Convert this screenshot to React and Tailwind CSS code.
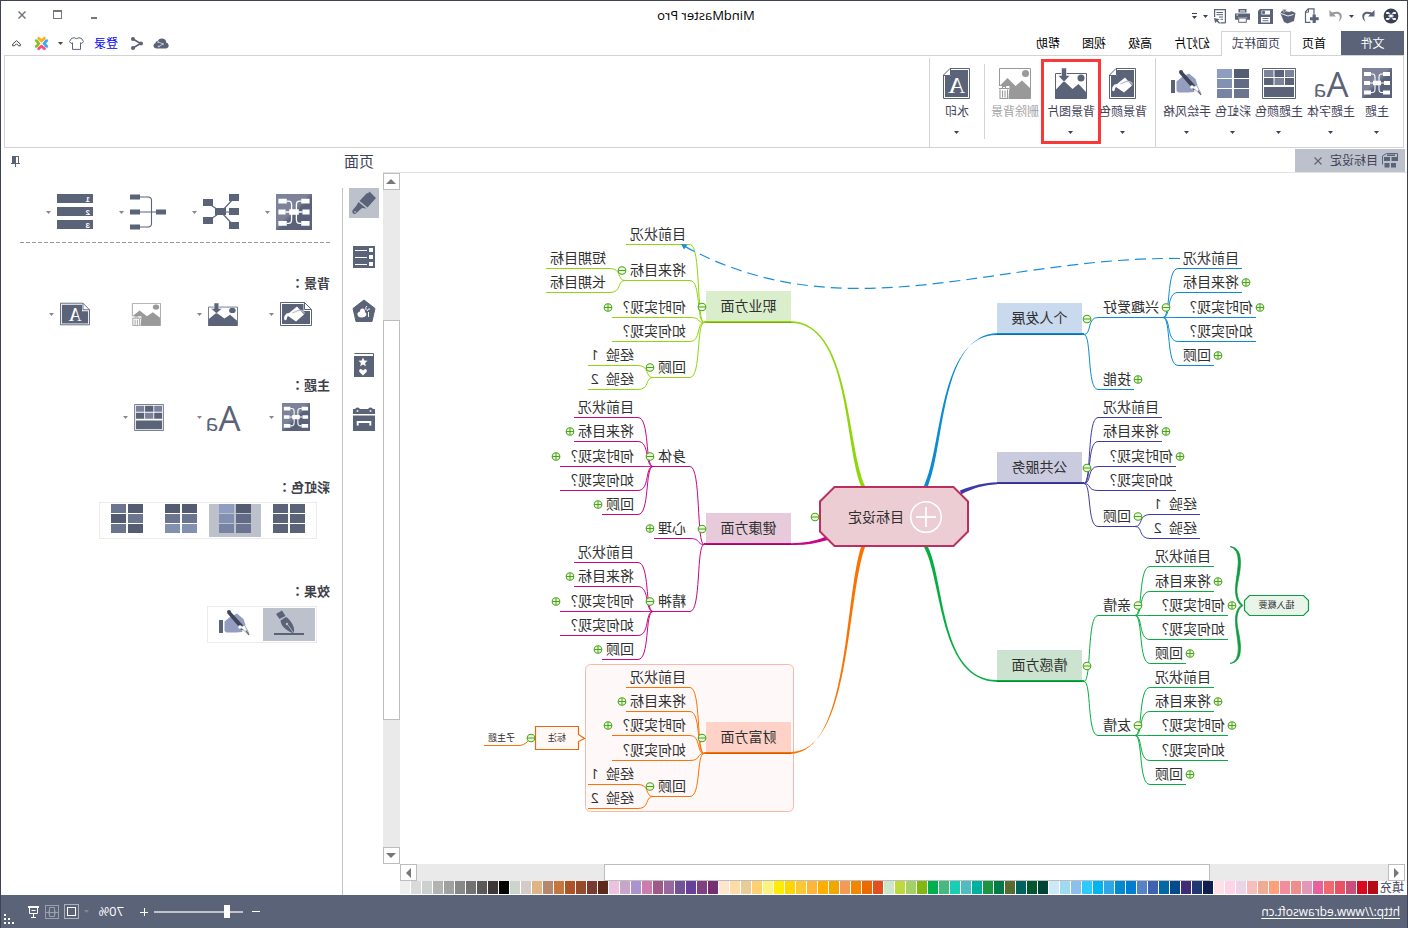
import React from "react";

const INK = "#5b6378";

/* ---------- icons ---------- */

function Caret({ className = "text-[#3f4257]" }) {
  return (
    <svg width="5" height="3" viewBox="0 0 5 3" className={className} aria-hidden="true">
      <path d="M0 0h5L2.5 3z" fill="currentColor" />
    </svg>
  );
}

function LogoIcon() {
  return (
    <svg width="16" height="16" viewBox="0 0 16 16" aria-hidden="true">
      <circle cx="8" cy="8" r="7.4" fill="#3a4055" />
      <path d="M4 5h2.5l1 3-1 3H4M12 5H9.500l-1 3 1 3H12M5 8h6" fill="none" stroke="#fff" strokeWidth="0.800" />
      <path d="M3.200 4h2.600v2H3.200zM10.200 4h2.600v2h-2.600zM3.200 10h2.600v2H3.200zM10.200 10h2.600v2h-2.600zM6.500 7h3v2h-3z" fill="#fff" />
    </svg>
  );
}

function UndoIcon({ color = INK, flip = false }) {
  return (
    <svg width="14" height="14" viewBox="0 0 14 14" aria-hidden="true">
      <g transform={flip ? "translate(14 0) scale(-1 1)" : undefined}>
        <path d="M.500 1v6.500H7L4.900 5.400C9 3.600 13 6 9.500 13 15.800 7.800 12.500.2 3 3.500z" fill={color} />
      </g>
    </svg>
  );
}

function NewPageIcon() {
  return (
    <svg width="15" height="16" viewBox="0 0 15 16" aria-hidden="true">
      <path d="M8.500 14.300h5V3.800L10.800.8H5v6" fill="none" stroke={INK} strokeWidth="1.200" />
      <path d="M10.500 1v3.200h3" fill="none" stroke={INK} strokeWidth="1" />
      <path d="M3.200 6.500h3.200v2.700H9v3H6.400V15H3.200v-2.800H.3v-3h2.900z" fill={INK} />
    </svg>
  );
}

function OpenIcon() {
  return (
    <svg width="16" height="15" viewBox="0 0 16 15" aria-hidden="true">
      <path d="M.500 4l4-2 2 1 7.500-1.500 1.500 3L12 13l-3.500 1.500L2 12z" fill={INK} />
      <path d="M2.500 5.500L8 7l7-2.500" stroke="#fff" strokeWidth="0.900" fill="none" />
      <path d="M9 .500l4.500-.2L12 3.500z" fill={INK} stroke="#fff" strokeWidth="0.500" />
    </svg>
  );
}

function SaveIcon() {
  return (
    <svg width="15" height="15" viewBox="0 0 15 15" aria-hidden="true">
      <path d="M0 0h13l2 2v13H0z" fill={INK} />
      <path d="M3 1.500h8.500v4H3zM3 8h9v5.500H3z" fill="#fff" />
      <path d="M8.500 2.200h1.800v2.400H8.500zM4.500 9.500h6M4.500 11.700h6" stroke={INK} strokeWidth="0.900" fill={INK} />
    </svg>
  );
}

function PrintIcon() {
  return (
    <svg width="15" height="14" viewBox="0 0 15 14" aria-hidden="true">
      <path d="M3.500 0h8v3.500h-8zM0 4.500h15v6.300h-3V8.500H3v2.300H0z" fill={INK} />
      <path d="M3.700 9h7.600v4.300H3.700z" fill="#fff" stroke={INK} />
      <path d="M5 2h5M12 6h1.500" stroke="#fff" />
    </svg>
  );
}

function ExportIcon() {
  return (
    <svg width="12" height="15" viewBox="0 0 12 15" aria-hidden="true">
      <path d="M.6 13.900V.6h10.800V8M.6 13.900h5" fill="none" stroke={INK} strokeWidth="1.200" />
      <path d="M3 3.500h6.500M3 5.700h6.500M3 8h4M3 10.300h2.500" stroke={INK} />
      <path d="M12 9l-5.500 1.200 1.600 1.200L5.800 14l1 .8 2.500-2.300 1.500 1.500z" fill={INK} />
    </svg>
  );
}

function ThemeIcon({ size = 30, id }) {
  return (
    <svg width={size} height={size} viewBox="0 0 30 30" aria-hidden="true">
      <defs>
        <linearGradient id={id} x1="1" y1="0" x2="0" y2="1">
          <stop offset="0.450" stopColor="#7d829a" />
          <stop offset="0.550" stopColor="#59627a" />
        </linearGradient>
      </defs>
      <path d="M0 0h30v30H0z" fill={`url(#${id})`} />
      <path d="M2 4h7v4H2zM21 4h7v4h-7zM2 13h6v4H2zM22 13h6v4h-6zM2 22.500h7v4H2zM21 22.500h7v4h-7zM11 12.800h8v4.500h-8z" fill="#fff" />
      <path
        d="M8 15h14M9 6h1.500q2.500 0 2.500 3v12q0 3.500-2.500 3.500H9M21 6h-1.500Q17 6 17 9v12q0 3.500 2.500 3.500H21"
        fill="none"
        stroke="#fff"
        strokeWidth="1.100"
      />
    </svg>
  );
}

function AaIcon() {
  return (
    <span aria-hidden="true" className="flex items-baseline pt-[6px] leading-[30px] text-[#5b6378]">
      <span className="text-[35px]">A</span>
      <span className="text-[23px]">a</span>
    </span>
  );
}

function ColorsIcon({ w = 34, h = 31 }) {
  const light = "#7d829c";
  return (
    <svg width={w} height={h} viewBox="0 0 34 31" aria-hidden="true">
      <path d="M.5.500h33v30H.500z" fill="#fff" stroke={INK} />
      <path d="M2 2h9v7H2zM22.500 2h9.500v7h-9.500zM12 10h9.500v7H12z" fill={light} />
      <path d="M12 2h9.500v7H12zM2 10h9v7H2zM22.500 10h9.500v7h-9.500zM2 19h30v10H2z" fill={INK} />
    </svg>
  );
}

function RainbowIcon({ fills }) {
  return (
    <svg width="32" height="29" viewBox="0 0 32 29" aria-hidden="true">
      {fills.map((f, i) => (
        <rect key={i} x={(i % 2) * 17} y={Math.floor(i / 2) * 10} width="15" height="9" fill={f} />
      ))}
    </svg>
  );
}

function HandPenIcon() {
  return (
    <svg width="31" height="26" viewBox="0 0 31 26" aria-hidden="true">
      <path d="M27 10h4v13h-4z" fill={INK} />
      <path d="M25.500 11.500L20 7 13 3.500 6.500 9 4.500 15l5 2.500-2 4.500 7 .5h9l2-1.500z" fill="#939dbf" />
      <path d="M19.500 1.500l3 2L8 20.500 4.500 18z" fill="#3f465a" />
      <path d="M9.500 17.500l-4-2.500L1 23.500l.8.700z" fill="#fff" stroke="#8d93a8" strokeWidth="0.800" />
      <path d="M1 25l3-4.500" stroke={INK} strokeWidth="1.200" />
      <circle cx="21" cy="2" r="2" fill="#3f465a" />
      <circle cx="10" cy="17" r="1.800" fill="#fff" />
    </svg>
  );
}

function Bucket() {
  return (
    <>
      <path d="M11 2.500L19 9l2.500.5q2 1.500 2.500 5-.5 2.500-2 1.500-1-.5-1-2.500l-1-1.500L12 17.500 4 10.500z" fill="#fff" />
      <path d="M3.500 9.500Q5 5.500 10 6.500l5.500 2.500" fill="none" stroke="#b9bdcb" strokeWidth="1.300" />
    </>
  );
}

function PortraitPage({ children }) {
  return (
    <svg width="27" height="31" viewBox="0 0 27 31" aria-hidden="true">
      <path d="M.5.500H20L26.500 7v23.500H.500z" fill="#fff" stroke={INK} />
      <path d="M2 2h17v6h6v21H2z" fill={INK} />
      <path d="M19.500 1v6.500H26" fill="none" stroke={INK} />
      {children}
    </svg>
  );
}

function LandscapePage({ children }) {
  return (
    <svg width="32" height="24" viewBox="0 0 32 24" aria-hidden="true">
      <path d="M7.500.500h24v23H.500V7.500z" fill="#fff" stroke={INK} />
      <path d="M8.500 2H30v20H2V9h6.500z" fill={INK} />
      <path d="M7.500.500v7H.500" fill="none" stroke={INK} />
      {children}
    </svg>
  );
}

function ImageIcon({ w = 32, h = 31 }) {
  return (
    <svg width={w} height={h} viewBox="0 0 32 31" preserveAspectRatio="none" aria-hidden="true">
      <path d="M.5 5.500h31v25H.500z" fill="#fff" stroke={INK} />
      <path d="M1 23l7.500-8 6 5 8.500-8 8.500 9v9.500H1z" fill={INK} transform="translate(0 1)" />
      <circle cx="6" cy="10" r="3.500" fill={INK} />
      <path d="M20.500 0h5v7.500H29L23 14l-6-6.500h3.500z" fill={INK} stroke="#fff" strokeWidth="0.600" />
    </svg>
  );
}

function RemoveImageIcon({ w = 33, h = 31 }) {
  return (
    <svg width={w} height={h} viewBox="0 0 33 31" preserveAspectRatio="none" aria-hidden="true">
      <path d="M.5.500h31v30H.500z" fill="#fff" stroke="#999" />
      <path d="M1 20l8-7.500 6.500 5.500 8-8 8 8v12.500H1z" fill="#999" />
      <circle cx="5.500" cy="5.500" r="3.500" fill="#999" />
      <path d="M21.500 18H33v13H22.500z" fill="#fff" />
      <path d="M22 20.500h10M25.500 20v-1.500h3V20M23.500 21.500v9h7.500v-9M26 22.500v7M28.500 22.500v7" fill="none" stroke="#999" strokeWidth="1.100" />
    </svg>
  );
}

function NibIcon() {
  return (
    <svg width="30" height="26" viewBox="0 0 30 26" aria-hidden="true">
      <path d="M0 23h30v2H0z" fill={INK} />
      <path d="M22 .500l6 3.500-3.500 5-6-3z" fill={INK} />
      <path d="M18 7l5.500 3.500c-.5 5-4 9-12 12.500L10 22C9 16 14 9.500 18 7z" fill={INK} />
      <path d="M11 22l5.500-7.500" stroke="#bdc1cc" strokeWidth="0.800" />
      <circle cx="17" cy="14" r="1.200" fill="#bdc1cc" />
    </svg>
  );
}

function RadialIcon() {
  return (
    <svg width="36" height="36" viewBox="0 0 36 36" aria-hidden="true">
      <path d="M5 4l13 14L5 32M2 18h16M18 18L31 9M18 18l13 9" fill="none" stroke={INK} strokeWidth="1.200" />
      <path d="M0 0h10v7H0zM0 14h10v7H0zM0 28h10v7H0zM13 14h11v7H13zM26 5h10v7H26zM26 23h10v7H26z" fill={INK} />
    </svg>
  );
}

function TreeIcon() {
  return (
    <svg width="36" height="36" viewBox="0 0 36 36" aria-hidden="true">
      <path d="M8 18h20M28 3H18q-3.500 0-3.500 3.500v23q0 3.500 3.500 3.500h10" fill="none" stroke={INK} strokeWidth="1.100" />
      <path d="M0 15.500h10v5H0zM26 .500h10v5H26zM26 15.500h10v5H26zM26 30.500h10v5H26z" fill={INK} />
    </svg>
  );
}

function NumberedIcon() {
  return (
    <svg width="36" height="36" viewBox="0 0 36 36" aria-hidden="true">
      <path d="M0 0h36v9H0zM0 13h36v9H0zM0 26h36v9H0z" fill={INK} />
      <g fill="#fff" fontSize="8" fontWeight="700" fontFamily="'Liberation Sans',sans-serif">
        <text x="3" y="7.500">1</text>
        <text x="3" y="20.500">2</text>
        <text x="3" y="33.500">3</text>
      </g>
    </svg>
  );
}

function BrushIcon() {
  return (
    <svg width="24" height="24" viewBox="0 0 24 24" aria-hidden="true">
      <g fill={INK}>
        <path d="M6.500.500L8 2.500 9 2l7.500 8-8 6.500L0 7z" />
        <path d="M9.500 17.500l8-6.500 2 3.500 3.700 4.500q1.300 2.500-.7 3.700-2 .8-3.500-1.200L14 17z" />
      </g>
      <path d="M8.800 17l8.200-6.800" stroke="#bdc1cc" strokeWidth="0.900" />
      <circle cx="20.900" cy="20.800" r="0.900" fill="#bdc1cc" />
    </svg>
  );
}

function ListIcon() {
  return (
    <svg width="22" height="22" viewBox="0 0 22 22" aria-hidden="true">
      <path d="M0 0h22v22H0z" fill={INK} />
      <path d="M2 2h4v4H2zM2 9h4v4H2zM2 16h4v4H2z" fill="#fff" />
      <path d="M8 4.500h12M8 11.500h12M8 18.500h12" stroke="#fff" />
    </svg>
  );
}

function PentagonIcon() {
  return (
    <svg width="24" height="24" viewBox="0 0 24 24" aria-hidden="true">
      <path d="M12 1L23 9.500 20 22.500H4L1 9.500z" fill={INK} stroke={INK} strokeLinejoin="round" />
      <path d="M11 13q0-3.500 2.500-3.500t2.500 3q3 .5 2.500 3.500-1 3-4.500 2.500T9.500 16q0-2 1.500-3z" fill="#fff" />
      <path d="M9 7q2 1 1 4M6 10q2.500-.5 3 2M7.500 13v5" stroke="#fff" strokeWidth="1" fill="none" />
    </svg>
  );
}

function StickerIcon() {
  return (
    <svg width="20" height="24" viewBox="0 0 20 24" aria-hidden="true">
      <path d="M.5 3V.500h19" fill="none" stroke={INK} />
      <path d="M0 3h20v21H0z" fill={INK} />
      <path d="M11 4.500l1.300 3 3.200.3-2.400 2.200.7 3.200L11 11.500l-2.800 1.700.7-3.200-2.400-2.200 3.200-.3z" fill="#fff" />
      <path d="M11 22.500l-3.700-3.700q-.8-2.300 1.200-2.800 1.500 0 2.500 1.500 1-1.500 2.500-1.500 2 .5 1.200 2.800z" fill="#fff" />
    </svg>
  );
}

function CalendarIcon() {
  return (
    <svg width="22" height="24" viewBox="0 0 22 24" aria-hidden="true">
      <path d="M0 2h22v5H0zM0 8.500h22V24H0z" fill={INK} />
      <circle cx="4.500" cy="3" r="2.500" fill={INK} />
      <circle cx="17.500" cy="3" r="2.500" fill={INK} />
      <path d="M3.700 4h1.600M16.700 4h1.600" stroke="#fff" strokeWidth="1.600" />
      <path d="M4.700 18.500V15h12.600v3.500" fill="none" stroke="#fff" strokeWidth="2" />
    </svg>
  );
}

function CloudIcon() {
  return (
    <svg width="16" height="11" viewBox="0 0 16 11" aria-hidden="true">
      <path d="M3.500 10.500Q.2 10.200.3 7.500.5 5 2.800 4.500 3 1 6.500.600 10 .200 11 2.800q2.300.200 2.600 2.300 2.200.900 2 3-.3 2.300-3 2.400z" fill={INK} />
      <path d="M10.500 4L6 6l4 2.500" stroke="#c9ccd6" fill="none" strokeWidth="0.900" />
      <path d="M10 3.200h1.600v1.600H10zM5.200 5.200h1.600v1.600H5.200zM9.500 7.700h1.600v1.600H9.500z" fill="#c9ccd6" />
    </svg>
  );
}

function ShareIcon() {
  return (
    <svg width="12" height="13" viewBox="0 0 12 13" aria-hidden="true">
      <path d="M10 2L2.500 6.500 10 11" fill="none" stroke={INK} strokeWidth="1.600" />
      <circle cx="10" cy="2" r="2" fill={INK} />
      <circle cx="2" cy="6.500" r="2" fill={INK} />
      <circle cx="10" cy="11" r="2" fill={INK} />
    </svg>
  );
}

function ShirtIcon() {
  return (
    <svg width="15" height="13" viewBox="0 0 15 13" aria-hidden="true">
      <path d="M5 .700q2.500 2 5 0l2.500.800 2 3-1.700 2-1.300-.7v6.600h-8V5.800l-1.300.7-1.700-2 2-3z" fill="#fff" stroke={INK} strokeLinejoin="round" />
    </svg>
  );
}

function ColorXIcon() {
  const petal = "M3.500 1.200Q5 0 6 1.800L7.500 3 9 1.800Q10 0 11.500 1.200 12.300 2.500 11 3.800L7.500 6.500 4 3.800Q2.700 2.500 3.500 1.200z";
  return (
    <svg width="15" height="15" viewBox="0 0 15 15" aria-hidden="true">
      <path d={petal} fill="#f9b01e" />
      <path d={petal} fill="#3aa8ee" transform="rotate(270 7.500 7.500)" />
      <path d={petal} fill="#f84c7c" transform="rotate(180 7.500 7.500)" />
      <path d={petal} fill="#8bbf1f" transform="rotate(90 7.500 7.500)" />
    </svg>
  );
}

function CollapseIcon() {
  return (
    <svg width="9" height="7" viewBox="0 0 9 7" aria-hidden="true">
      <path d="M.700 4L4.500.700 8.300 4v1.800H6.500l-2-2-2 2H.700z" fill="none" stroke="#444" />
    </svg>
  );
}

function PinIcon() {
  return (
    <svg width="9" height="11" viewBox="0 0 9 11" aria-hidden="true">
      <path d="M1 0h7v8H1zM0 7h9v1H0zM4 8h1v3H4z" fill={INK} />
      <path d="M2 1h2v6H2z" fill="#fff" />
    </svg>
  );
}

function DocIcon() {
  return (
    <svg width="16" height="15" viewBox="0 0 16 15" aria-hidden="true">
      <path d="M.500 4V.500h11L15.500 3v8.500" fill="none" stroke={INK} />
      <path d="M0 4h6.500v4H0zM8 4h6v4H8zM2 10h5v4.500H2zM8.500 10h5v4.500h-5zM3 1.500h8V3H3z" fill={INK} />
    </svg>
  );
}

/* ---------- mind map ---------- */

const ORIGIN = { x: 1, y: 173 };
const YS = (a) => [
  { t: "目前状况", y: a[0] },
  { t: "将来目标", y: a[1], s: "+" },
  { t: "何时实现？", y: a[2], s: "+" },
  { t: "如何实现？", y: a[3] },
  { t: "回顾", y: a[4], s: "+" },
];
const PAIR = (a, b) => [
  { t: "经验  1", y: a },
  { t: "经验  2", y: b },
];

const BRANCHES = [
  {
    t: "个人发展", dir: -1, y: 334, color: "#0a8bd2", fill: "#c9d9ee",
    kids: [
      { t: "兴趣爱好", y: 317, s: "-", kids: YS([268, 292, 317, 341, 365]) },
      { t: "技能", y: 389, s: "+" },
    ],
  },
  {
    t: "公共服务", dir: -1, y: 483, color: "#3f3ba6", fill: "#cbcbe0",
    kids: [
      ...YS([417, 441, 466, 490, 526]).slice(0, 4),
      { t: "回顾", y: 526, s: "-", kids: PAIR(514, 538) },
    ],
  },
  {
    t: "情感方面", dir: -1, y: 681, color: "#06ae42", fill: "#cce3cf",
    kids: [
      { t: "亲情", y: 615, s: "-", kids: YS([566, 591, 615, 639, 663]) },
      { t: "友情", y: 735, s: "-", kids: YS([687, 711, 735, 760, 784]) },
    ],
  },
  {
    t: "职业方面", dir: 1, y: 322, color: "#8fd60a", fill: "#daeecb",
    kids: [
      { t: "目前状况", y: 244 },
      {
        t: "将来目标", y: 280, s: "-",
        kids: [
          { t: "短期目标", y: 268 },
          { t: "长期目标", y: 292 },
        ],
      },
      { t: "何时实现？", y: 317, s: "+" },
      { t: "如何实现？", y: 341 },
      { t: "回顾", y: 377, s: "-", kids: PAIR(365, 389) },
    ],
  },
  {
    t: "健康方面", dir: 1, y: 544, color: "#c6058a", fill: "#e8cbda",
    kids: [
      { t: "身体", y: 466, s: "-", kids: YS([417, 441, 466, 490, 514]) },
      { t: "心理", y: 538, s: "+" },
      { t: "精神", y: 611, s: "-", kids: YS([562, 586, 611, 635, 659]) },
    ],
  },
  {
    t: "财富方面", dir: 1, y: 753, color: "#fb7203", fill: "#ffd2c8",
    kids: [
      ...YS([687, 711, 735, 760, 796]).slice(0, 4),
      { t: "回顾", y: 796, s: "-", kids: PAIR(784, 808) },
    ],
  },
];

const charWidth = (c) => (c === " " ? 3 : c.charCodeAt(0) > 255 ? 14 : 8);
const textWidth = (t) => [...t].reduce((w, c) => w + charWidth(c), 0);

function layout() {
  const labels = [];
  const paths = [];
  const toggles = [];
  const bend = (jx, jy, ex, ey) => {
    const dx = ex - jx;
    return `M${jx} ${jy + 0.5}C${jx + dx * 0.55} ${jy + 0.5} ${jx + dx * 0.2} ${ey + 0.5} ${ex} ${ey + 0.5}`;
  };
  const walk = (node, dir, jx, jy, ex, color) => {
    const w = textWidth(node.t) + 8;
    const far = ex + dir * w;
    const x1 = Math.min(ex, far);
    paths.push({ d: `${bend(jx, jy, ex, node.y)}H${far + (node.kids ? dir : 0)}`, color });
    labels.push({ t: node.t, x: x1 + (dir < 0 ? 3 : 4), y: node.y - 18 });
    if (node.s) toggles.push({ x: far + dir * 4, y: node.y - 9.5, s: node.s });
    (node.kids || []).forEach((k) => walk(k, dir, far + dir, node.y, far + dir * 16, color));
  };
  BRANCHES.forEach((b) => {
    const jx = b.dir < 0 ? 324 : 704;
    toggles.push({ x: b.dir < 0 ? 321 : 706, y: b.y - 15, s: "-" });
    b.kids.forEach((k) => walk(k, b.dir, jx, b.y, jx + b.dir * 14, b.color));
  });
  return { labels, paths, toggles };
}

const MAP = layout();

function Toggle({ x, y, s }) {
  return (
    <g fill="none" stroke="#4ba31c">
      <circle cx={x} cy={y} r="3.800" fill="#e9f7da" strokeWidth="1.100" />
      <path d={`M${x - 3.5} ${y}h7${s === "+" ? `M${x} ${y - 3.5}v7` : ""}`} />
    </g>
  );
}

const TRUNKS = [
  { color: "#0a8bd2", s: [482, 486, 410, 334] },
  { color: "#06ae42", s: [482, 547, 410, 681] },
  { color: "#8fd60a", s: [545, 486, 618, 322] },
  { color: "#fb7203", s: [545, 547, 618, 753] },
];

function trunk([sx, sy, ex, ey]) {
  const dir = Math.sign(ex - sx);
  const c1y = sy + (ey - sy) * 0.26;
  const c1 = sx + dir * 18;
  const c2 = sx + dir * 13;
  return `M${sx - 2} ${sy}C${c1 - 1} ${c1y} ${c2 - 1} ${ey} ${ex} ${ey - 1}V${ey + 1}C${c2 + 1} ${ey} ${c1 + 1} ${c1y} ${sx + 2} ${sy}z`;
}

function MindMap() {
  return (
    <div className="relative min-h-[680px] flex-1 overflow-hidden bg-white text-[14px] leading-4 text-[#303030]">
      <svg width="1007" height="691" viewBox="1 173 1007 691" className="absolute left-0 top-0" fill="none" aria-hidden="true">
        <rect x="614.500" y="664.500" width="208" height="147" rx="5" fill="#fff8f8" stroke="#fbb8a8" />
        {TRUNKS.map((k) => (
          <path key={k.color} d={trunk(k.s)} fill={k.color} />
        ))}
        <path d="M448 490.500C434 485 424 483 411 482.300V484.300C424 485 436 488.500 447 494.500z" fill="#3f3ba6" />
        <path d="M582 536.500C594 541.500 604 543 617 543.200V545C604 545.500 592 543.500 580 540z" fill="#c6058a" />
        {MAP.paths.map((p, i) => (
          <path key={i} d={p.d} stroke={p.color} />
        ))}
        {BRANCHES.map((b) => {
          const x = b.dir < 0 ? 326 : 617;
          return (
            <g key={b.t}>
              <rect x={x} y={b.y - 31} width="85" height="31" fill={b.fill} />
              <path d={b.dir < 0 ? `M324 ${b.y}H411` : `M617 ${b.y}H704`} stroke={b.color} strokeWidth="2" />
              <path d={`M${x} ${b.y + 0.5}h85`} stroke="#00000030" />
            </g>
          );
        })}
        <path d="M454.500 487H573.500L588 501.500V531.500L573.500 546H454.500L440 531.500V501.500z" fill="#edcdd4" stroke="#b9305f" strokeWidth="2" />
        <circle cx="482" cy="517" r="15.300" stroke="#fff" strokeWidth="1.600" />
        <path d="M472 517h20M482 507v20" stroke="#fff" strokeWidth="1.800" />
        {MAP.toggles.map((t, i) => (
          <Toggle key={i} {...t} />
        ))}
        <Toggle x={593} y={517} s="-" />

        <path d="M228 258.500C410 256 560 335 724 246" stroke="#1b8fd6" strokeDasharray="11 6" strokeWidth="1.200" />
        <path d="M727 244l-6.500.5 3.500 5z" fill="#1b8fd6" />

        <path
          d="M178 546.500Q167.500 547 167.500 562C167.500 575 171.500 583 171 592Q170.500 601 165 605.500Q170.500 609 171 618C171.500 628 167.500 636 167.500 648Q167.500 663 178 663.500Q169.500 661.500 169.700 648C170 637 173 628 172.500 618Q172 609 167 605.500Q172 601 172.500 592C173 583 170 573 169.700 562Q169.500 549 178 546.500z"
          fill="#119c3f"
          stroke="#119c3f"
          strokeWidth="0.700"
        />
        <path d="M104.500 595.500H158.500L163.500 600.500V610.500L158.500 615.500H104.500L99.500 610.500V600.500z" fill="#e9f4ea" stroke="#119c3f" strokeWidth="1.200" />

        <path d="M829.500 726.500H872.500V749.500H829.500V741.500L823.500 738.500L829.500 734.500z" fill="#fff8f5" stroke="#e8690b" strokeWidth="1.200" />
        <path d="M877 738Q883 745.500 889 745.500H924" stroke="#fb7203" />
        <Toggle x={877} y={738} s="-" />
      </svg>

      {MAP.labels.map((l, i) => (
        <span key={i} className="absolute whitespace-pre" style={{ left: l.x - ORIGIN.x, top: l.y - ORIGIN.y }}>
          {l.t}
        </span>
      ))}
      {BRANCHES.map((b) => (
        <span
          key={b.t}
          className="absolute w-[85px] text-center"
          style={{ left: (b.dir < 0 ? 326 : 617) - ORIGIN.x, top: b.y - 24 - ORIGIN.y }}
        >
          {b.t}
        </span>
      ))}
      <span className="absolute left-[503px] top-[336px]">目标设定</span>
      <span className="absolute left-[98px] top-[424px] w-[65px] text-center text-[9px]">插入概要</span>
      <span className="absolute left-[828px] top-[557px] w-[44px] text-center text-[9px]">标注</span>
      <span className="absolute left-[892px] top-[557px] text-[9px]">子主题</span>
    </div>
  );
}

/* ---------- page parts ---------- */

function IconButton({ label, className = "", children, ...rest }) {
  return (
    <button type="button" aria-label={label} className={`flex items-center justify-center ${className}`} {...rest}>
      {children}
    </button>
  );
}

function TitleBar() {
  return (
    <header className="flex h-[30px] items-center">
      <div className="flex flex-1 items-center pl-2">
        <LogoIcon />
        <IconButton label="撤销" className="ml-2 w-[14px]"><UndoIcon /></IconButton>
        <IconButton label="撤销列表" className="w-[18px]"><Caret /></IconButton>
        <IconButton label="重做" className="w-[14px]"><UndoIcon color="#9a9a9a" flip /></IconButton>
        <IconButton label="新建" className="ml-[6px] w-[23px]"><NewPageIcon /></IconButton>
        <IconButton label="打开" className="w-[23px]"><OpenIcon /></IconButton>
        <IconButton label="保存" className="w-[23px]"><SaveIcon /></IconButton>
        <IconButton label="打印" className="w-[23px]"><PrintIcon /></IconButton>
        <IconButton label="导出" className="w-[21px]"><ExportIcon /></IconButton>
        <IconButton label="导出列表" className="w-2"><Caret /></IconButton>
        <IconButton label="自定义" className="ml-px w-3">
          <span className="flex flex-col items-center gap-[2px]">
            <span className="h-px w-[5px] bg-[#3f4257]" />
            <Caret />
          </span>
        </IconButton>
      </div>
      <h1 className="text-[13px] text-black">MindMaster Pro</h1>
      <div className="flex flex-1 items-center justify-end pr-3">
        <IconButton label="最小化" className="h-6 w-9 pt-1"><span className="h-[2px] w-[6px] bg-[#777]" /></IconButton>
        <IconButton label="最大化" className="h-6 w-9 pb-[3px]"><span className="h-[9px] w-[9px] border border-t-2 border-[#777]" /></IconButton>
        <IconButton label="关闭" className="h-6 w-[27px] pb-[3px] pl-2">
          <svg width="8" height="8" viewBox="0 0 8 8"><path d="M.500.500l7 7M7.500.500l-7 7" stroke="#777" strokeWidth="1.500" /></svg>
        </IconButton>
      </div>
    </header>
  );
}

function Tabs() {
  return (
    <nav className="flex h-6 items-stretch pl-[3px] text-[12px] text-black">
      <button type="button" className="mr-1 w-[63px] bg-[#5b6378] pt-[2px] text-white">文件</button>
      <button type="button" className="px-[11px] pt-[2px]">首页</button>
      <button type="button" className="relative -mb-px border border-b-0 border-[#d3d3d3] bg-white px-[10px] text-[#3f4257]">页面样式</button>
      {["幻灯片", "高级", "视图", "帮助"].map((t) => (
        <button key={t} type="button" className="px-[11px] pt-[2px]">{t}</button>
      ))}
      <div className="ml-auto flex items-center pr-2">
        <IconButton label="云" className="w-6"><CloudIcon /></IconButton>
        <IconButton label="分享" className="w-[25px]"><ShareIcon /></IconButton>
        <a href="#login" className="mx-[6px] pt-[2px] text-[#0000ff]">登录</a>
        <IconButton label="皮肤" className="w-[22px]"><ShirtIcon /></IconButton>
        <IconButton label="皮肤列表" className="w-[10px]"><Caret /></IconButton>
        <IconButton label="社区" className="w-7"><ColorXIcon /></IconButton>
        <IconButton label="收起功能区" className="ml-[3px] w-4"><CollapseIcon /></IconButton>
      </div>
    </nav>
  );
}

const RAINBOW = {
  plain: ["#5b6378", "#5b6378", "#5b6378", "#5b6378", "#5b6378", "#5b6378"],
  side: ["#545c72", "#8f9dc0", "#636b84", "#8290b2", "#6c7590", "#7883a4"],
  down: ["#545c72", "#545c72", "#6c7590", "#6c7590", "#8290b2", "#8290b2"],
  cross: ["#545c72", "#6c7590", "#6c7590", "#545c72", "#545c72", "#6c7590"],
};

function RibbonItem({ label, icon, width, disabled, marked }) {
  return (
    <button type="button" disabled={disabled} className={`relative flex flex-col items-center ${width}`}>
      <span className="flex h-8 items-center justify-center">{icon}</span>
      <span className={`mt-[3px] whitespace-nowrap text-[12px] leading-5 ${disabled ? "text-[#a3a3a3]" : "text-[#3f4257]"}`}>{label}</span>
      {!disabled && <span className="mt-[9px] flex"><Caret /></span>}
      {marked && <span className="pointer-events-none absolute -inset-x-1 -top-2 h-[85px] border-[3px] border-[#fb3838]" />}
    </button>
  );
}

function Ribbon() {
  return (
    <div className="mx-[3px] flex h-[93px] border border-[#d3d3d3] text-[#3f4257]">
      <div className="mt-[2px] flex border-r border-[#d3d3d3] pl-[6px] pr-[5px] pt-[9px]">
        <RibbonItem label="主题" width="w-10" icon={<ThemeIcon id="themeRibbon" />} />
        <RibbonItem label="主题字体" width="w-[52px]" icon={<AaIcon />} />
        <RibbonItem label="主题颜色" width="w-[52px]" icon={<ColorsIcon />} />
        <RibbonItem label="彩虹色" width="w-10" icon={<RainbowIcon fills={RAINBOW.side} />} />
        <RibbonItem label="手绘风格" width="w-[52px]" icon={<HandPenIcon />} />
      </div>
      <div className="mt-[2px] flex border-r border-[#d3d3d3] pl-[6px] pt-[9px]">
        <RibbonItem label="背景颜色" width="w-[52px]" icon={<PortraitPage><g transform="translate(0 7)"><Bucket /></g></PortraitPage>} />
        <RibbonItem label="背景图片" width="w-[52px]" icon={<ImageIcon />} marked />
        <RibbonItem label="删除背景" width="w-[60px]" icon={<RemoveImageIcon />} disabled />
        <div className="-mt-[3px] mb-2 border-l border-[#d3d3d3]" />
        <RibbonItem
          label="水印"
          width="w-[54px]"
          icon={
            <PortraitPage>
              <text x="13.500" y="25" textAnchor="middle" fontSize="24" fontFamily="'Liberation Serif',serif" fill="#fff">A</text>
            </PortraitPage>
          }
        />
      </div>
    </div>
  );
}

const SWATCHES = (
  "b40c14 da0a1e c95078 e95262 ee6a6e e8609c e098b8 ee8e8a f28e9c ffa07a f0ab94 f6bfbc ead4e8 fed4e6 ffe0e6 " +
  "10204e 223872 422c78 064a8e 0468a4 3f62b0 5682c6 007fd0 008bd0 2ea8e4 00b4f2 2ecaff 8ac0ec a0daf0 cceaf6 " +
  "004438 00582e 00645e 566c30 007a48 1c963e 00b09e 50bcc0 18ceb4 46ba7e 00b050 80b810 a4d068 bed83e cce6cc " +
  "e05020 ec6800 f28600 f49a56 f0a800 ffae00 ffb638 fac832 ffd600 ffec00 fcf27e ffd070 eacc96 fedca8 fee6cc " +
  "763070 824080 66409a 745298 98689e a05a88 cc7cae ab92d0 c8a6ca ecc2de 5c2a1c 783a32 964c2c ac5426 c47840 " +
  "b5876f deb686 d4cbc8 cbd5cc 000000 403838 5a5858 727272 888888 a0a2a0 b2b4b2 ccd0ce dadada eeeeee"
).split(" ");

const ARROWS = { up: "M0 5L5 0l5 5z", down: "M0 0h10L5 5z", left: "M5 0v10L0 5z", right: "M0 0v10l5-5z" };

function ScrollButton({ dir, label }) {
  const vertical = dir === "up" || dir === "down";
  return (
    <IconButton label={label} className="h-[17px] w-[17px] shrink-0 border border-[#bdbdbd] bg-white">
      <svg width={vertical ? 10 : 5} height={vertical ? 5 : 10} aria-hidden="true">
        <path d={ARROWS[dir]} fill="#777" />
      </svg>
    </IconButton>
  );
}

function Workspace() {
  return (
    <main className="flex min-w-0 flex-1 flex-col">
      <div className="flex h-[25px] border-b border-[#e3e3e3] pl-[2px] pt-px">
        <div className="flex w-[110px] items-center bg-[#bdc1cc] pl-[7px] text-[12px] text-[#3f4257]">
          <DocIcon />
          <span className="ml-1">目标设定</span>
          <IconButton label="关闭文档" className="ml-1 w-4">
            <svg width="8" height="8" viewBox="0 0 8 8"><path d="M.500.500l7 7M7.500.500l-7 7" stroke="#666" strokeWidth="1.200" /></svg>
          </IconButton>
        </div>
      </div>
      <div className="flex flex-1">
        <MindMap />
        <div className="flex w-[17px] flex-col bg-[#eaeaea]">
          <ScrollButton dir="up" label="向上滚动" />
          <span className="flex-[130]" />
          <span className="flex-[400] border border-[#bdbdbd] bg-white" />
          <span className="flex-[127]" />
          <ScrollButton dir="down" label="向下滚动" />
        </div>
      </div>
      <div className="ml-[2px] mr-[17px] flex h-[17px] bg-[#eaeaea]">
        <ScrollButton dir="left" label="向左滚动" />
        <span className="flex-[178]" />
        <span className="flex-[605] border border-[#bdbdbd] bg-white" />
        <span className="flex-[187]" />
        <ScrollButton dir="right" label="向右滚动" />
      </div>
      <div className="mr-[17px] flex h-[14px] items-start pl-[3px]">
        <span className="mr-[2px] shrink-0 text-[12px] leading-[14px] text-[#3f4257]">填充</span>
        <div className="flex min-w-0 flex-1 gap-px overflow-hidden">
          {SWATCHES.map((c, i) => (
            <button key={i} type="button" aria-label={`颜色 #${c}`} className="h-[13px] w-[10px] shrink-0" style={{ backgroundColor: `#${c}` }} />
          ))}
        </div>
      </div>
    </main>
  );
}

function PanelItem({ label, width, iconWidth, caret = true, children }) {
  return (
    <button type="button" aria-label={label} className={`flex shrink-0 items-center gap-[6px] ${width}`}>
      <span className={`flex justify-center ${iconWidth}`}>{children}</span>
      {caret && <Caret className="text-[#888]" />}
    </button>
  );
}

function PanelHeading({ className, children }) {
  return (
    <h3 className={`text-[13px] ${className}`}>
      {children}
      <span className="font-['Noto_Sans_CJK_TC',sans-serif]" lang="zh-TW">：</span>
    </h3>
  );
}

function Choice({ label, selected, children }) {
  return (
    <IconButton label={label} aria-pressed={!!selected} className={`h-[33px] w-[52px] pb-1 ${selected ? "bg-[#bdc1cc]" : ""}`}>
      {children}
    </IconButton>
  );
}

function SidePanel() {
  const rail = [
    ["页面样式", <BrushIcon />],
    ["大纲", <ListIcon />],
    ["图标", <PentagonIcon />],
    ["剪贴画", <StickerIcon />],
    ["任务", <CalendarIcon />],
  ];
  return (
    <aside className="flex w-[382px] shrink-0 flex-col">
      <div className="flex h-[26px] items-center justify-between pl-[9px] pr-[10px]">
        <h2 className="text-[15px] text-[#3f4257]">页面</h2>
        <IconButton label="固定面板"><PinIcon /></IconButton>
      </div>
      <div className="mt-[14px] flex flex-1">
        <div className="flex w-10 shrink-0 flex-col items-center gap-6 pr-[2px]">
          {rail.map(([label, icon], i) => (
            <IconButton key={label} label={label} className={`h-[30px] w-[30px] ${i === 0 ? "bg-[#bdc1cc]" : ""}`}>
              {icon}
            </IconButton>
          ))}
        </div>
        <div className="min-w-0 flex-1 border-l border-[#c4c4c4] pl-3 pr-[19px] pt-[6px] text-[12px] font-bold leading-5 text-[#3f3f4a]">
          <div className="flex h-9 pl-[18px]">
            {[
              ["布局", <ThemeIcon id="themeLayout" size={36} />],
              ["放射图", <RadialIcon />],
              ["树状图", <TreeIcon />],
              ["编号", <NumberedIcon />],
            ].map(([label, icon]) => (
              <PanelItem key={label} label={label} width="w-[73px]" iconWidth="w-9">{icon}</PanelItem>
            ))}
          </div>
          <svg className="mt-3 block h-px w-full" aria-hidden="true">
            <path d="M0 .500h2000" stroke="#999" strokeDasharray="4 2" />
          </svg>
          <PanelHeading className="mt-[30px]">背景</PanelHeading>
          <div className="mt-[6px] flex h-[30px] pl-[18px]">
            <PanelItem label="背景颜色" width="w-[74px]" iconWidth="w-8">
              <LandscapePage><g transform="translate(4 2)"><Bucket /></g></LandscapePage>
            </PanelItem>
            <PanelItem label="背景图片" width="w-[74px]" iconWidth="w-[30px]"><ImageIcon w={30} h={23} /></PanelItem>
            <PanelItem label="删除背景" width="w-[74px]" iconWidth="w-9" caret={false}><RemoveImageIcon w={30} h={23} /></PanelItem>
            <PanelItem label="水印" width="w-[74px]" iconWidth="w-[30px]">
              <LandscapePage>
                <text x="16" y="19" textAnchor="middle" fontSize="19" fontWeight="400" fontFamily="'Liberation Serif',serif" fill="#fff">A</text>
              </LandscapePage>
            </PanelItem>
          </div>
          <PanelHeading className="mt-[46px]">主题</PanelHeading>
          <div className="mt-[7px] flex h-[30px] pl-[18px] font-normal">
            <PanelItem label="主题" width="w-[74px]" iconWidth="w-8"><ThemeIcon id="themePanel" size={28} /></PanelItem>
            <PanelItem label="主题字体" width="w-[74px]" iconWidth="w-[30px]"><AaIcon /></PanelItem>
            <PanelItem label="主题颜色" width="w-[74px]" iconWidth="w-[30px]"><ColorsIcon w={30} h={27} /></PanelItem>
          </div>
          <PanelHeading className="mt-[45px]">彩虹色</PanelHeading>
          <div className="ml-[13px] mt-[5px] inline-flex gap-[2px] border border-[#ebebeb] px-px py-px">
            <Choice label="单色"><RainbowIcon fills={RAINBOW.plain} /></Choice>
            <Choice label="左右渐变" selected><RainbowIcon fills={RAINBOW.side} /></Choice>
            <Choice label="上下渐变"><RainbowIcon fills={RAINBOW.down} /></Choice>
            <Choice label="交错"><RainbowIcon fills={RAINBOW.cross} /></Choice>
          </div>
          <PanelHeading className="mt-[42px]">效果</PanelHeading>
          <div className="ml-[13px] mt-[5px] inline-flex gap-[2px] border border-[#ebebeb] px-px py-px">
            <Choice label="普通" selected><NibIcon /></Choice>
            <Choice label="手绘风格"><HandPenIcon /></Choice>
          </div>
        </div>
      </div>
    </aside>
  );
}

function StatusBar() {
  return (
    <footer className="flex h-[33px] items-center bg-[#5b6378] text-white">
      <a href="http://www.edrawsoft.cn" className="pl-[7px] text-[12px] underline underline-offset-2">http://www.edrawsoft.cn</a>
      <div className="ml-auto flex h-full items-center">
        <IconButton label="缩小" className="w-4"><span className="h-px w-2 bg-white" /></IconButton>
        <input
          type="range"
          aria-label="缩放比例"
          min="10"
          max="400"
          defaultValue="70"
          className="ml-[5px] h-[13px] w-[89px] appearance-none bg-transparent [&::-webkit-slider-runnable-track]:h-[2px] [&::-webkit-slider-runnable-track]:bg-[#c3c3c3] [&::-webkit-slider-thumb]:-mt-[6px] [&::-webkit-slider-thumb]:h-[13px] [&::-webkit-slider-thumb]:w-[6px] [&::-webkit-slider-thumb]:appearance-none [&::-webkit-slider-thumb]:bg-white"
        />
        <IconButton label="放大" className="w-5">
          <svg width="8" height="8"><path d="M4 0v8M0 4h8" stroke="#fff" strokeWidth="1" shapeRendering="crispEdges" /></svg>
        </IconButton>
        <span className="ml-[10px] w-8 text-[13px]">70%</span>
        <IconButton label="缩放列表" className="w-[10px]"><Caret className="text-[#888]" /></IconButton>
        <IconButton label="适合页面" className="ml-px w-[19px]">
          <svg width="15" height="15" fill="none" stroke="#fff">
            <rect x=".5" y=".5" width="14" height="14" strokeDasharray="1 1" />
            <rect x="3.500" y="3.500" width="8" height="8" />
          </svg>
        </IconButton>
        <IconButton label="适合宽度" className="w-[19px]">
          <svg width="14" height="14" fill="none" stroke="#9a9fae">
            <rect x=".5" y=".5" width="13" height="13" />
            <path d="M4.500 2.500h5v9h-5zM0 7.500h14M4 5.500v4M10 5.500v4" />
          </svg>
        </IconButton>
        <IconButton label="演示" className="w-[19px]">
          <svg width="11" height="12" fill="none" stroke="#fff">
            <path d="M0 1h11" strokeWidth="2" />
            <path d="M1.500 2v5.500h8V2M5.500 8v3M3 11.500h5M3.500 4.500h4" />
          </svg>
        </IconButton>
        <svg width="10" height="10" className="mb-1 ml-[10px] mr-[3px] self-end" fill="#fff" aria-hidden="true">
          <path d="M8 0h2v2H8zM8 4h2v2H8zM4 4h2v2H4zM8 8h2v2H8zM4 8h2v2H4zM0 8h2v2H0z" />
        </svg>
      </div>
    </footer>
  );
}

export default function App() {
  return (
    <div className="flex min-h-screen -scale-x-100 flex-col border-x border-t border-[#3f4257] bg-white font-['Open_Sans','Noto_Sans_CJK_SC',sans-serif]">
      <TitleBar />
      <Tabs />
      <Ribbon />
      <div className="flex flex-1">
        <Workspace />
        <SidePanel />
      </div>
      <StatusBar />
    </div>
  );
}
